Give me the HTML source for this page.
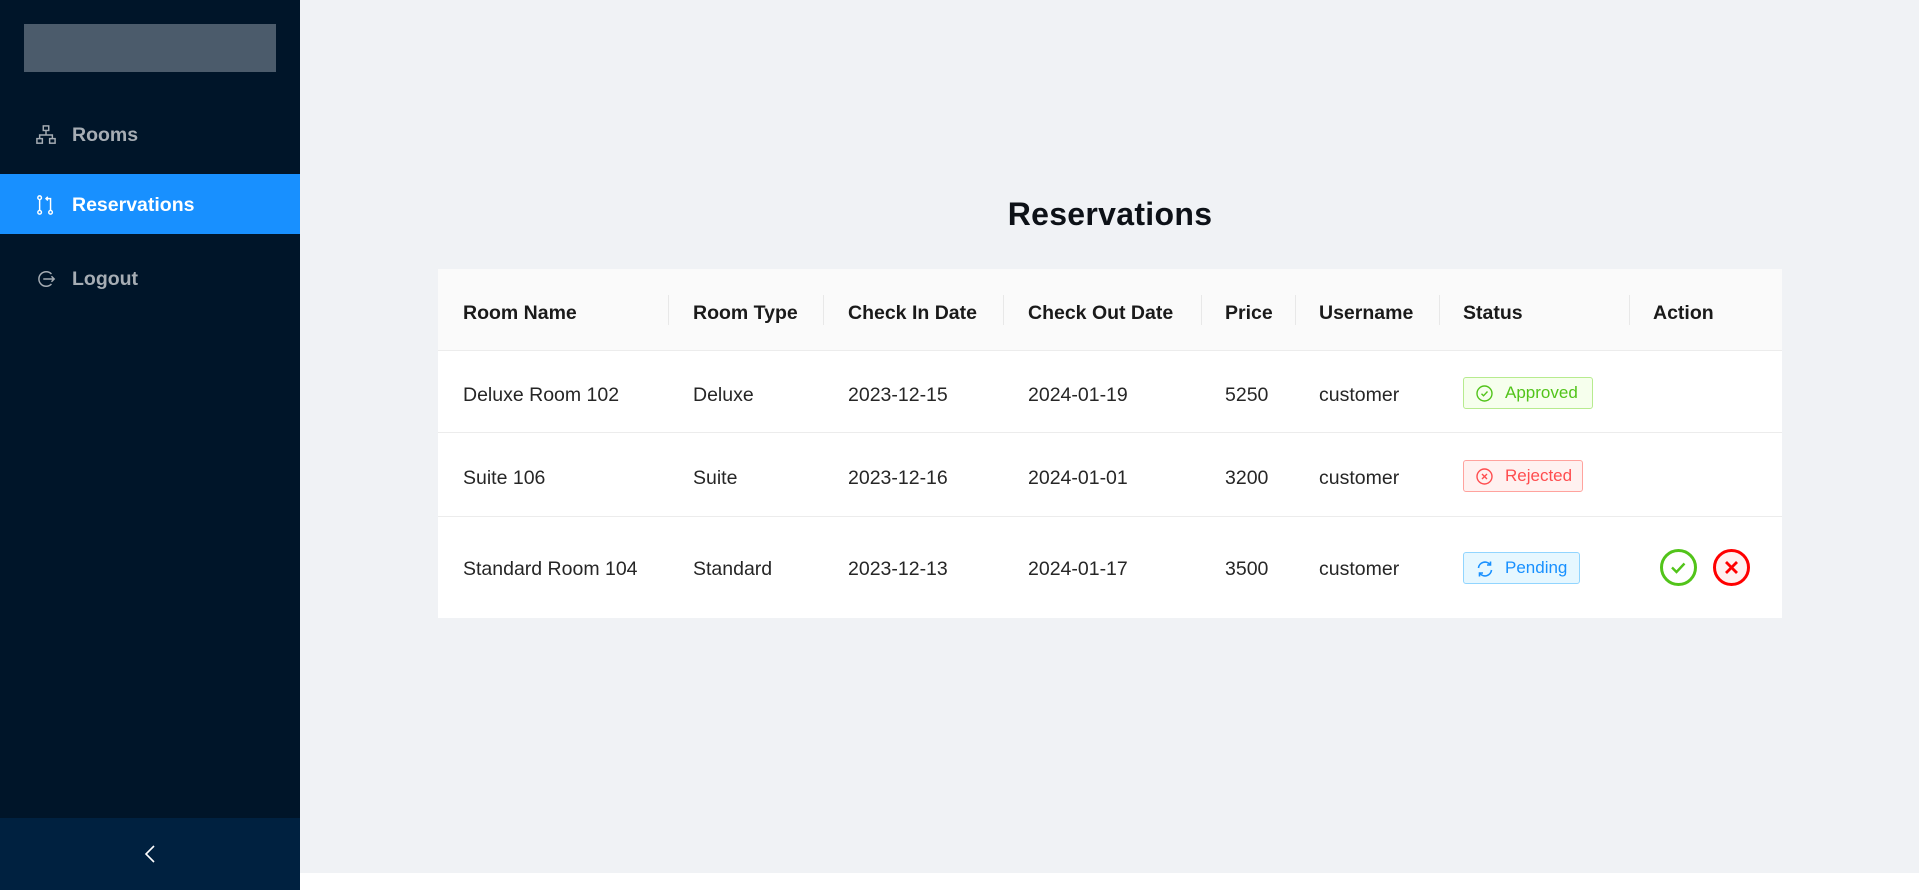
<!DOCTYPE html>
<html><head><meta charset="utf-8"><style>
*{box-sizing:border-box;margin:0;padding:0}
body{width:1919px;height:890px;overflow:hidden;background:#fff;font-family:"Liberation Sans",Arial,sans-serif;position:relative}
.side{position:absolute;left:0;top:0;width:300px;height:890px;background:#001529}
.logo{position:absolute;left:24px;top:24px;width:252px;height:48px;background:#4b5b6b}
.item{position:absolute;left:0;width:300px;height:60px;color:#a6adb4;font-weight:bold;font-size:19.5px;line-height:60px}
.item span{position:absolute;left:72px;top:1px}
.item svg{position:absolute;left:36px;top:21px}
.item.act{background:#1890ff;color:#fff}
.trig{position:absolute;left:0;top:818px;width:300px;height:72px;background:#002140}
.main{position:absolute;left:300px;top:0;width:1619px;height:873px;background:#f0f2f5}
h1{position:absolute;left:438px;width:1344px;top:196px;text-align:center;font-size:32px;font-weight:600;color:#0d1117;letter-spacing:0.3px}
.tbl{position:absolute;left:438px;top:269px;width:1344px;height:349px;background:#fff}
.row{position:absolute;left:0;width:1344px;border-bottom:1px solid #ececec}
.hd{top:0;height:82px;background:#fafafa;font-weight:600;color:#1f1f1f}
.c{position:absolute;font-size:19.5px;color:#262626;margin-top:3px}
.hd .c{color:#1a1a1a}
.sep{position:absolute;top:26px;width:1px;height:30px;background:#e8e8e8}
.tag{position:absolute;left:1025px;height:32px;border:1px solid;border-radius:3px;font-size:17px;line-height:30px;padding-left:41px}
.tag svg{position:absolute;left:12px;top:7px}
.btn{position:absolute;width:37px;height:37px;border-radius:50%;border:3px solid}
</style></head><body>
<div class="side">
<div class="logo"></div>
<div class="item" style="top:104px"><svg width="20" height="20" viewBox="0 0 22 22" fill="none" stroke="#a6adb4" stroke-width="1.6"><rect x="8" y="1" width="6" height="5"/><rect x="1" y="15" width="6" height="5"/><rect x="15" y="15" width="6" height="5"/><path d="M11 6v5M4 15v-4h14v4"/></svg><span>Rooms</span></div>
<div class="item act" style="top:174px"><svg width="20" height="20" viewBox="0 0 22 22" fill="none" stroke="#fff" stroke-width="1.6"><circle cx="4" cy="3" r="2"/><circle cx="4" cy="19" r="2"/><circle cx="16" cy="19" r="2"/><path d="M4 5v12M16 17V4h-5M13 2l-2 2 2 2"/></svg><span>Reservations</span></div>
<div class="item" style="top:248px"><svg width="20" height="20" viewBox="0 0 22 22" fill="none" stroke="#a6adb4" stroke-width="1.6"><path d="M17 5.5A8 8 0 1 0 17 16.5"/><path d="M8 11h12M17 8l3 3-3 3"/></svg><span>Logout</span></div>
<div class="trig"><svg style="position:absolute;left:143px;top:27px" width="14" height="18" viewBox="0 0 14 18" fill="none" stroke="#fff" stroke-width="1.6"><path d="M11 1L3 9l8 8"/></svg></div>
</div>
<div class="main"></div>
<h1>Reservations</h1>
<div class="tbl">
<div class="row hd">
<div class="c" style="left:25px;top:30px">Room Name</div>
<div class="sep" style="left:230px"></div>
<div class="c" style="left:255px;top:30px">Room Type</div>
<div class="sep" style="left:385px"></div>
<div class="c" style="left:410px;top:30px">Check In Date</div>
<div class="sep" style="left:565px"></div>
<div class="c" style="left:590px;top:30px">Check Out Date</div>
<div class="sep" style="left:763px"></div>
<div class="c" style="left:787px;top:30px">Price</div>
<div class="sep" style="left:857px"></div>
<div class="c" style="left:881px;top:30px">Username</div>
<div class="sep" style="left:1001px"></div>
<div class="c" style="left:1025px;top:30px">Status</div>
<div class="sep" style="left:1191px"></div>
<div class="c" style="left:1215px;top:30px">Action</div>
</div>
<div class="row" style="top:82px;height:82px">
<div class="c" style="left:25px;top:30px">Deluxe Room 102</div>
<div class="c" style="left:255px;top:30px">Deluxe</div>
<div class="c" style="left:410px;top:30px">2023-12-15</div>
<div class="c" style="left:590px;top:30px">2024-01-19</div>
<div class="c" style="left:787px;top:30px">5250</div>
<div class="c" style="left:881px;top:30px">customer</div>
<div class="tag" style="top:26px;width:130px;color:#52c41a;background:#f6ffed;border-color:#b7eb8f"><svg width="17" height="17" viewBox="0 0 17 17" fill="none" stroke="#52c41a" stroke-width="1.4"><circle cx="8.5" cy="8.5" r="7.5"/><path d="M5.5 8.8l2 2 4-4.3"/></svg>Approved</div>
</div>
<div class="row" style="top:164px;height:84px">
<div class="c" style="left:25px;top:31px">Suite 106</div>
<div class="c" style="left:255px;top:31px">Suite</div>
<div class="c" style="left:410px;top:31px">2023-12-16</div>
<div class="c" style="left:590px;top:31px">2024-01-01</div>
<div class="c" style="left:787px;top:31px">3200</div>
<div class="c" style="left:881px;top:31px">customer</div>
<div class="tag" style="top:27px;width:120px;color:#ff4d4f;background:#fff1f0;border-color:#ffa39e"><svg width="17" height="17" viewBox="0 0 17 17" fill="none" stroke="#ff4d4f" stroke-width="1.4"><circle cx="8.5" cy="8.5" r="7.5"/><path d="M6 6l5 5M11 6l-5 5"/></svg>Rejected</div>
</div>
<div class="row" style="top:248px;height:101px;border-bottom:none">
<div class="c" style="left:25px;top:38px">Standard Room 104</div>
<div class="c" style="left:255px;top:38px">Standard</div>
<div class="c" style="left:410px;top:38px">2023-12-13</div>
<div class="c" style="left:590px;top:38px">2024-01-17</div>
<div class="c" style="left:787px;top:38px">3500</div>
<div class="c" style="left:881px;top:38px">customer</div>
<div class="tag" style="top:35px;width:117px;color:#1890ff;background:#e6f7ff;border-color:#91d5ff"><svg width="18" height="18" viewBox="0 0 18 18" fill="none" stroke="#1890ff" stroke-width="1.6"><path d="M2.5 8A6.5 6.5 0 0 1 14 4.5M15.5 10A6.5 6.5 0 0 1 4 13.5"/><path d="M14.5 1.5v3.5H11M3.5 16.5V13H7"/></svg>Pending</div>
<div class="btn" style="left:1222px;top:32px;border-color:#52c41a"><svg width="31" height="31" viewBox="0 0 31 31" fill="none" stroke="#52c41a" stroke-width="2.4"><path d="M9 15.5l4.5 4.5 8-8.5"/></svg></div>
<div class="btn" style="left:1275px;top:32px;border-color:#f00;background:#fff1f0"><svg width="31" height="31" viewBox="0 0 31 31" fill="none" stroke="#f00" stroke-width="2.8"><path d="M10 10l11 11M21 10L10 21"/></svg></div>
</div>
</div>
</body></html>
